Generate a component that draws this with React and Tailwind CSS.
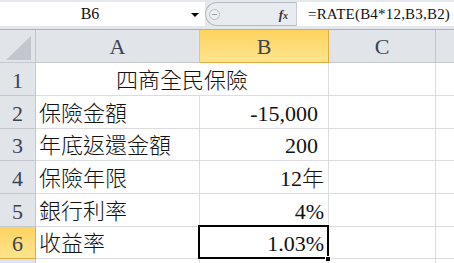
import React from 'react';

const serif = { fontFamily: '"Liberation Serif", "Noto Sans CJK TC", serif' };

const rows = [
  { n: 1, h: 'h-[33px]', title: '四商全民保險' },
  { n: 2, h: 'h-[33px]', a: '保險金額', b: '-15,000', pad: 'pr-[10px]' },
  { n: 3, h: 'h-[32px]', a: '年底返還金額', b: '200', pad: 'pr-[10px]' },
  { n: 4, h: 'h-[33px]', a: '保險年限', b: '12年', pad: 'pr-[4px]' },
  { n: 5, h: 'h-[33px]', a: '銀行利率', b: '4%', pad: 'pr-[4px]' },
  { n: 6, h: 'h-[32px]', a: '收益率', b: '1.03%', pad: 'pr-[4px]', selected: true },
];

function RowHead({ n, active }) {
  return (
    <div
      className={`w-[36px] shrink-0 flex items-end justify-center pb-[3px] border-r border-b text-[22px] leading-none text-[#3a4354] ${
        active
          ? 'bg-gradient-to-b from-[#fdd35e] to-[#ffe48d] border-[#e2ac3f]'
          : 'bg-[#e1e4e9] border-[#c3c8cf]'
      }`}
    >
      {n}
    </div>
  );
}

export default function App() {
  return (
    <div className="w-[454px] h-[263px] overflow-hidden bg-white text-[#111]" style={serif}>
      {/* formula bar */}
      <div className="h-[30px] bg-[#e4e7eb] border-b border-[#a9b0b9] flex pt-[2px] pb-[3px]">
        <div className="w-[205px] bg-white flex items-center relative">
          <span className="w-[180px] text-center text-[16px] leading-none">B6</span>
          <span className="absolute left-[191px] top-[11px] w-0 h-0 border-l-[4px] border-r-[4px] border-t-[4px] border-l-transparent border-r-transparent border-t-black" />
        </div>
        <div className="w-[91px] flex items-center rounded-l-[12px] border-l border-t border-b border-[#b4bac3] bg-[#e8ebef]">
          <span className="ml-[3px] w-[11px] h-[11px] rounded-full border border-[#b8bec7] bg-[#eef0f3] flex items-center justify-center">
            <span className="w-[5px] h-[1px] bg-[#9aa1ab]" />
          </span>
          <span className="ml-auto mr-[8px] italic font-bold text-[13px] leading-none text-[#333]">
            f<span className="text-[10px]">x</span>
          </span>
        </div>
        <div className="flex-1 bg-white flex items-center pl-[11px] text-[15px] leading-none tracking-[0.2px] border-l border-[#c8cdd3]">
          =RATE(B4*12,B3,B2)
        </div>
      </div>

      {/* column headers */}
      <div className="flex h-[33px] text-[22px] leading-none text-[#3a4354]">
        <div className="w-[36px] shrink-0 bg-[#e1e4e9] border-r border-b border-[#c3c8cf] relative">
          <svg className="absolute left-[6px] top-[6px]" width="25" height="24" viewBox="0 0 25 24">
            <polygon points="25,0 25,24 0,24" fill="#c3c7cd" />
          </svg>
        </div>
        <div className="w-[164px] shrink-0 bg-[#e1e4e9] border-r border-b border-[#c3c8cf] flex items-end justify-center pb-[4px]">A</div>
        <div className="w-[129px] shrink-0 bg-gradient-to-b from-[#fdd35e] to-[#ffe48d] border-r border-b border-[#e2ac3f] flex items-end justify-center pb-[4px]">B</div>
        <div className="w-[107px] shrink-0 bg-[#e1e4e9] border-r border-b border-[#c3c8cf] flex items-end justify-center pb-[4px]">C</div>
        <div className="flex-1 bg-[#e1e4e9] border-b border-[#c3c8cf]" />
      </div>

      {/* rows */}
      {rows.map((r) => (
        <div key={r.n} className={`flex ${r.h}`}>
          <RowHead n={r.n} active={r.selected} />
          {r.title ? (
            <div className="w-[293px] shrink-0 border-r border-b border-[#dadcdf] flex items-end justify-center pb-[3px] text-[22px] leading-none font-light">
              {r.title}
            </div>
          ) : (
            <>
              <div className="w-[164px] shrink-0 border-r border-b border-[#dadcdf] flex items-end pl-[3px] pb-[3px] text-[22px] leading-none font-light">
                {r.a}
              </div>
              <div className={`w-[129px] shrink-0 border-r border-b border-[#dadcdf] flex items-end justify-end pb-[3px] text-[22px] leading-none font-light relative ${r.pad}`}>
                {r.b}
                {r.selected && (
                  <>
                    <span className="absolute -left-[2px] -top-[2px] w-[131px] h-[34px] border-2 border-black" />
                    <span className="absolute right-[-3px] bottom-[-4px] w-[6px] h-[6px] bg-black border border-white" />
                  </>
                )}
              </div>
            </>
          )}
          <div className="w-[107px] shrink-0 border-r border-b border-[#dadcdf]" />
          <div className="flex-1 border-b border-[#dadcdf]" />
        </div>
      ))}
      <div className="flex h-[5px]">
        <div className="w-[36px] shrink-0 bg-[#e1e4e9] border-r border-[#c3c8cf]" />
        <div className="w-[164px] shrink-0 border-r border-[#dadcdf]" />
        <div className="w-[129px] shrink-0 border-r border-[#dadcdf]" />
        <div className="w-[107px] shrink-0 border-r border-[#dadcdf]" />
      </div>
    </div>
  );
}
